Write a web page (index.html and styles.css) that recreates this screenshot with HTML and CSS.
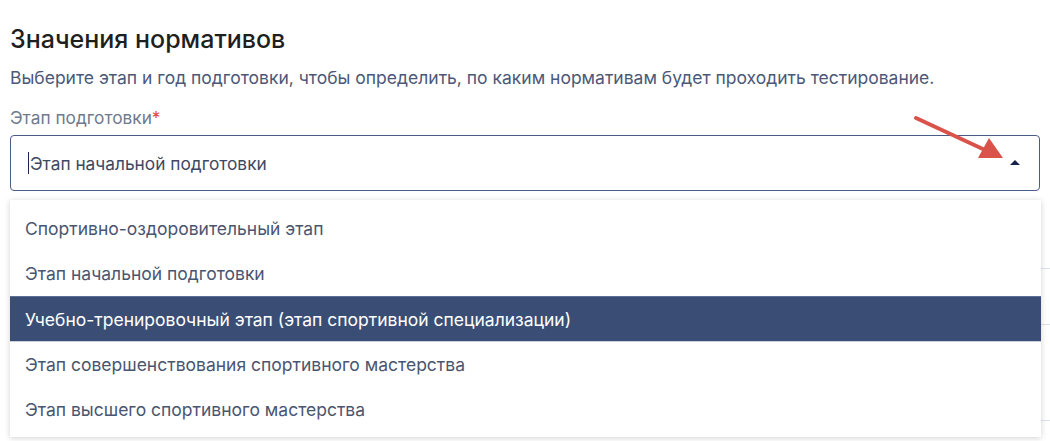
FILE: index.html
```html
<!DOCTYPE html>
<html lang="ru">
<head>
    <meta charset="UTF-8">
    <meta name="viewport" content="width=device-width, initial-scale=1.0">
    <title>Значения нормативов</title>
    <link rel="stylesheet" href="styles.css">
</head>
<body>
    <main class="page">
        <!-- Header -->
        <h2 class="title">Значения нормативов</h2>
        <p class="subtitle">Выберите этап и год подготовки, чтобы определить, по каким нормативам будет проходить тестирование.</p>

        <!-- Stage select -->
        <div class="field">
            <label class="field-label">Этап подготовки<span class="required">*</span></label>
            <div class="select">
                <div class="select-value"><span class="caret"></span>Этап начальной подготовки</div>
                <span class="select-arrow"></span>
            </div>

            <ul class="menu">
                <li class="menu-item">Спортивно-оздоровительный этап</li>
                <li class="menu-item">Этап начальной подготовки</li>
                <li class="menu-item active">Учебно-тренировочный этап (этап спортивной специализации)</li>
                <li class="menu-item">Этап совершенствования спортивного мастерства</li>
                <li class="menu-item">Этап высшего спортивного мастерства</li>
            </ul>
        </div>

        <!-- Table rows under the menu -->
        <div class="rows">
            <div class="row"></div>
            <div class="row"></div>
            <div class="row row-tall"></div>
        </div>
    </main>

    <!-- Annotation arrow -->
    <svg class="pointer" width="1050" height="441" viewBox="0 0 1050 441">
        <line x1="916" y1="118" x2="985" y2="150" stroke="#d9534a" stroke-width="4" stroke-linecap="round"/>
        <polygon points="1003,158 978,158 989,138" fill="#d9534a"/>
    </svg>
</body>
</html>
```

FILE: styles.css
```css
/* Global Styles */
html {
    overflow: hidden;
}

body {
    font-family: Inter, "Noto Sans", sans-serif;
    margin: 0;
    padding: 0;
    min-height: 441px;
    background-color: #fff;
    color: #222;
}

.page {
    padding: 0 10px;
}

.title {
    margin: 0;
    padding-top: 24px;
    font-size: 25px;
    font-weight: 500;
    line-height: 30px;
    color: #1f1f1f;
}

.subtitle {
    margin: 13px 0 0;
    font-size: 17.5px;
    line-height: 21px;
    color: #4b5878;
}

.field {
    position: relative;
    margin-top: 19px;
}

.field-label {
    display: block;
    font-size: 17.3px;
    line-height: 21px;
    color: #6f7a8f;
}

.required {
    color: #e0463f;
}

.select {
    position: relative;
    margin-top: 7px;
    height: 54px;
    border: 1px solid #4a5d86;
    border-radius: 4px;
    display: flex;
    align-items: center;
}

.select-value {
    display: flex;
    align-items: center;
    padding-left: 17px;
    font-size: 17.3px;
    color: #3d4862;
}

.caret {
    width: 1px;
    height: 22px;
    background-color: #1a2550;
    margin-right: 1px;
}

.select-arrow {
    position: absolute;
    right: 19px;
    top: 24px;
    width: 0;
    height: 0;
    border-left: 5px solid transparent;
    border-right: 5px solid transparent;
    border-bottom: 5px solid #16234f;
}

.menu {
    position: absolute;
    left: 0;
    right: -1px;
    top: 93px;
    margin: 0;
    padding: 6px 0 5px;
    list-style: none;
    background-color: #fff;
    box-shadow: 0 1px 6px rgba(0, 0, 0, 0.18);
    z-index: 2;
}

.menu-item {
    height: 45px;
    display: flex;
    align-items: center;
    padding-left: 15px;
    font-size: 17.5px;
    color: #4a5570;
}

.menu-item.active {
    background-color: #3a4e75;
    color: #fff;
    border-top: 1px solid #5c6f95;
    border-bottom: 1px solid #c9d0de;
    height: 44px;
}

/* rows of the table that lies under the menu */
.rows {
    margin: 0 -10px 0 0;
    padding: 22px 0 20px;
}

.row {
    height: 55px;
    border-bottom: 1px solid #dde1e9;
}

.row-tall {
    height: 95px;
}

.pointer {
    position: absolute;
    left: 0;
    top: 0;
    z-index: 3;
    pointer-events: none;
}
```
